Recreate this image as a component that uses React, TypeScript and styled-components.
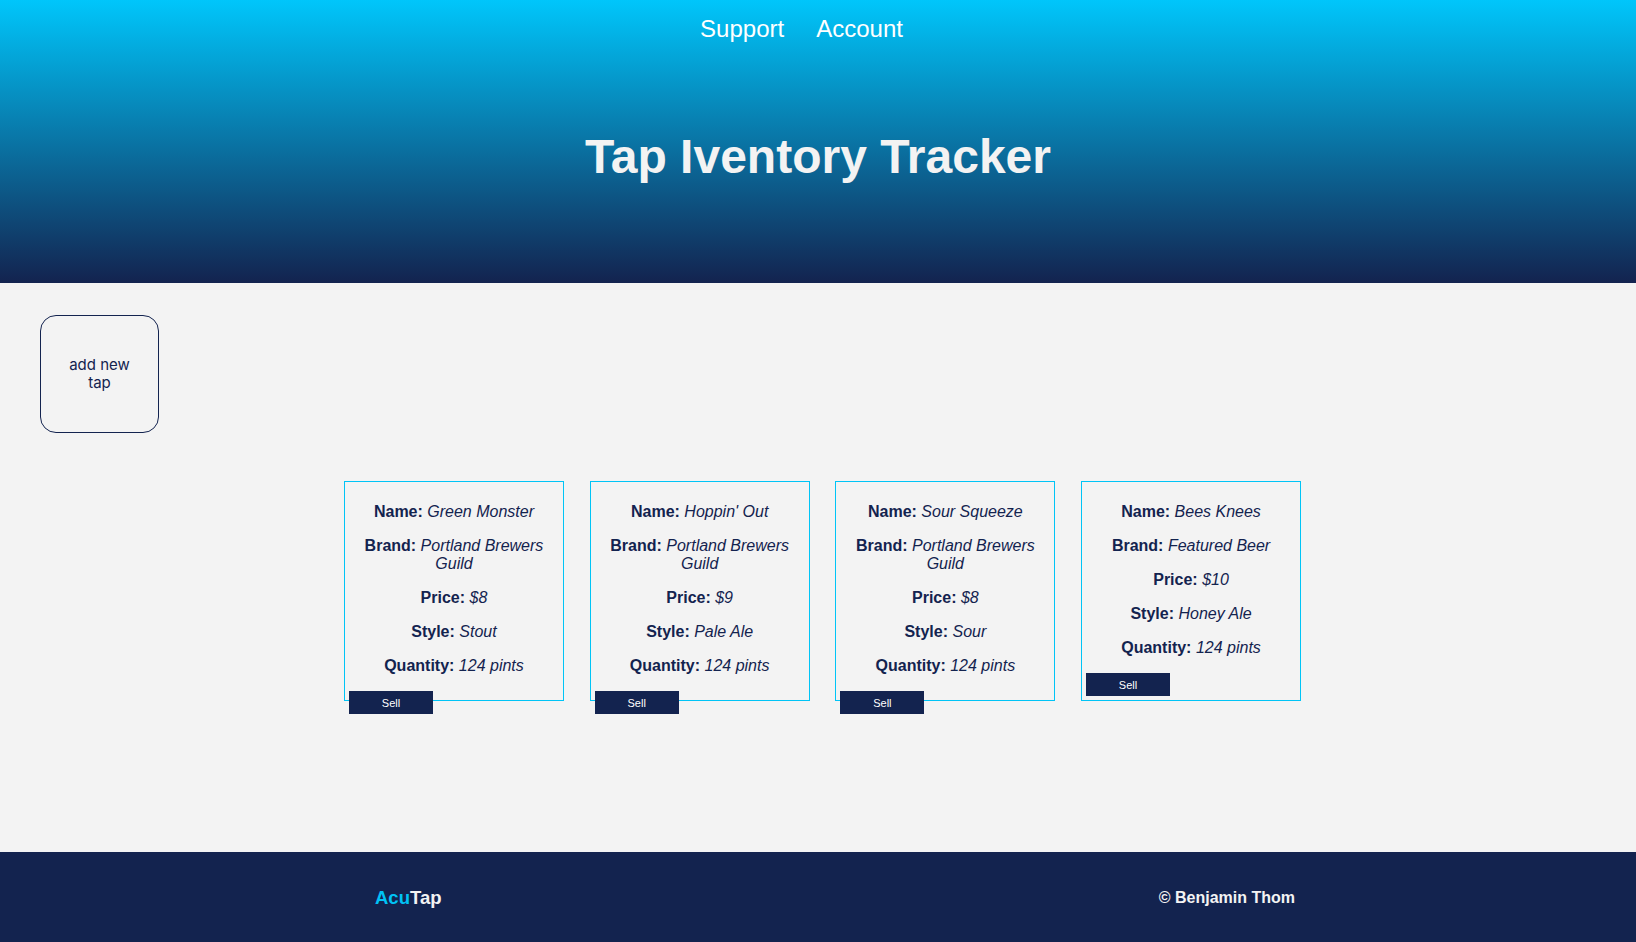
import React from 'react';
import { styled, createGlobalStyle } from 'styled-components';

const GlobalStyle = createGlobalStyle`
  html, body {
    margin: 0;
    padding: 0;
  }
  body {
    background: #f3f3f3;
    font-family: "Liberation Sans", Arial, Helvetica, sans-serif;
    color: #13234f;
  }
`;

const Page = styled.div`
  min-height: 100vh;
  display: flex;
  flex-direction: column;
`;

const Header = styled.header`
  height: 283px;
  display: flex;
  flex-direction: column;
  align-items: center;
  background: linear-gradient(180deg, #00c6fb 0%, #13234f 100%);
`;

const Nav = styled.nav`
  display: flex;
  gap: 32px;
  margin-top: 15px;
  padding-right: 33px;
`;

const NavLink = styled.a`
  color: #ffffff;
  font-size: 24px;
  line-height: 28px;
  text-decoration: none;
  cursor: pointer;
`;

const Title = styled.h1`
  margin: 86px 0 0;
  color: #f3f3f3;
  font-size: 48px;
  line-height: 56px;
  font-weight: 700;
`;

const Main = styled.main`
  flex: 1;
  padding: 32px 0 0 40px;
`;

const AddButton = styled.button`
  box-sizing: border-box;
  width: 119px;
  height: 118px;
  padding: 0 20px;
  display: flex;
  align-items: center;
  justify-content: center;
  border: 1px solid #13234f;
  border-radius: 16px;
  background: transparent;
  color: #13234f;
  font-family: Inter, "Liberation Sans", sans-serif;
  font-size: 15px;
  line-height: 18px;
  cursor: pointer;
`;

const TapRow = styled.div`
  display: flex;
  justify-content: center;
  gap: 25.7px;
  margin: 48px 0 0 -31px;
`;

const Card = styled.div`
  box-sizing: border-box;
  width: 220px;
  height: 220px;
  padding: 5px 4px 4px;
  border: 1px solid #00c4f6;
  text-align: center;
`;

const Field = styled.p`
  margin: 16px 0;
  font-size: 16px;
  line-height: 18px;
`;

const Label = styled.strong`
  font-weight: 700;
`;

const Value = styled.em`
  font-style: italic;
`;

const SellButton = styled.button`
  display: block;
  width: 40%;
  height: 23px;
  padding: 0;
  border: none;
  background: #13234f;
  color: #ffffff;
  font-family: "Liberation Sans", Arial, sans-serif;
  font-size: 11px;
  cursor: pointer;
`;

const Footer = styled.footer`
  height: 90px;
  display: flex;
  align-items: center;
  justify-content: space-between;
  padding: 2px 341px 0 375px;
  box-sizing: border-box;
  background: #13234f;
  font-weight: 700;
`;

const Brand = styled.div`
  font-size: 18.5px;
  color: #f3f3f3;
`;

const BrandAccent = styled.span`
  color: #00c2f5;
`;

const Copyright = styled.div`
  font-size: 16px;
  color: #f3f3f3;
`;

type Tap = {
  name: string;
  brand: string;
  price: string;
  style: string;
  quantity: number;
};

const taps: Tap[] = [
  { name: 'Green Monster', brand: 'Portland Brewers Guild', price: '$8', style: 'Stout', quantity: 124 },
  { name: "Hoppin' Out", brand: 'Portland Brewers Guild', price: '$9', style: 'Pale Ale', quantity: 124 },
  { name: 'Sour Squeeze', brand: 'Portland Brewers Guild', price: '$8', style: 'Sour', quantity: 124 },
  { name: 'Bees Knees', brand: 'Featured Beer', price: '$10', style: 'Honey Ale', quantity: 124 },
];

function TapCard({ tap }: { tap: Tap }) {
  return (
    <Card>
      <Field>
        <Label>Name:</Label> <Value>{tap.name}</Value>
      </Field>
      <Field>
        <Label>Brand:</Label> <Value>{tap.brand}</Value>
      </Field>
      <Field>
        <Label>Price:</Label> <Value>{tap.price}</Value>
      </Field>
      <Field>
        <Label>Style:</Label> <Value>{tap.style}</Value>
      </Field>
      <Field>
        <Label>Quantity:</Label> <Value>{tap.quantity} pints</Value>
      </Field>
      <SellButton>Sell</SellButton>
    </Card>
  );
}

function App() {
  return (
    <Page>
      <GlobalStyle />
      <Header>
        <Nav>
          <NavLink>Support</NavLink>
          <NavLink>Account</NavLink>
        </Nav>
        <Title>Tap Iventory Tracker</Title>
      </Header>
      <Main>
        <AddButton>add new tap</AddButton>
        <TapRow>
          {taps.map((tap) => (
            <TapCard key={tap.name} tap={tap} />
          ))}
        </TapRow>
      </Main>
      <Footer>
        <Brand>
          <BrandAccent>Acu</BrandAccent>Tap
        </Brand>
        <Copyright>© Benjamin Thom</Copyright>
      </Footer>
    </Page>
  );
}

export default App;
